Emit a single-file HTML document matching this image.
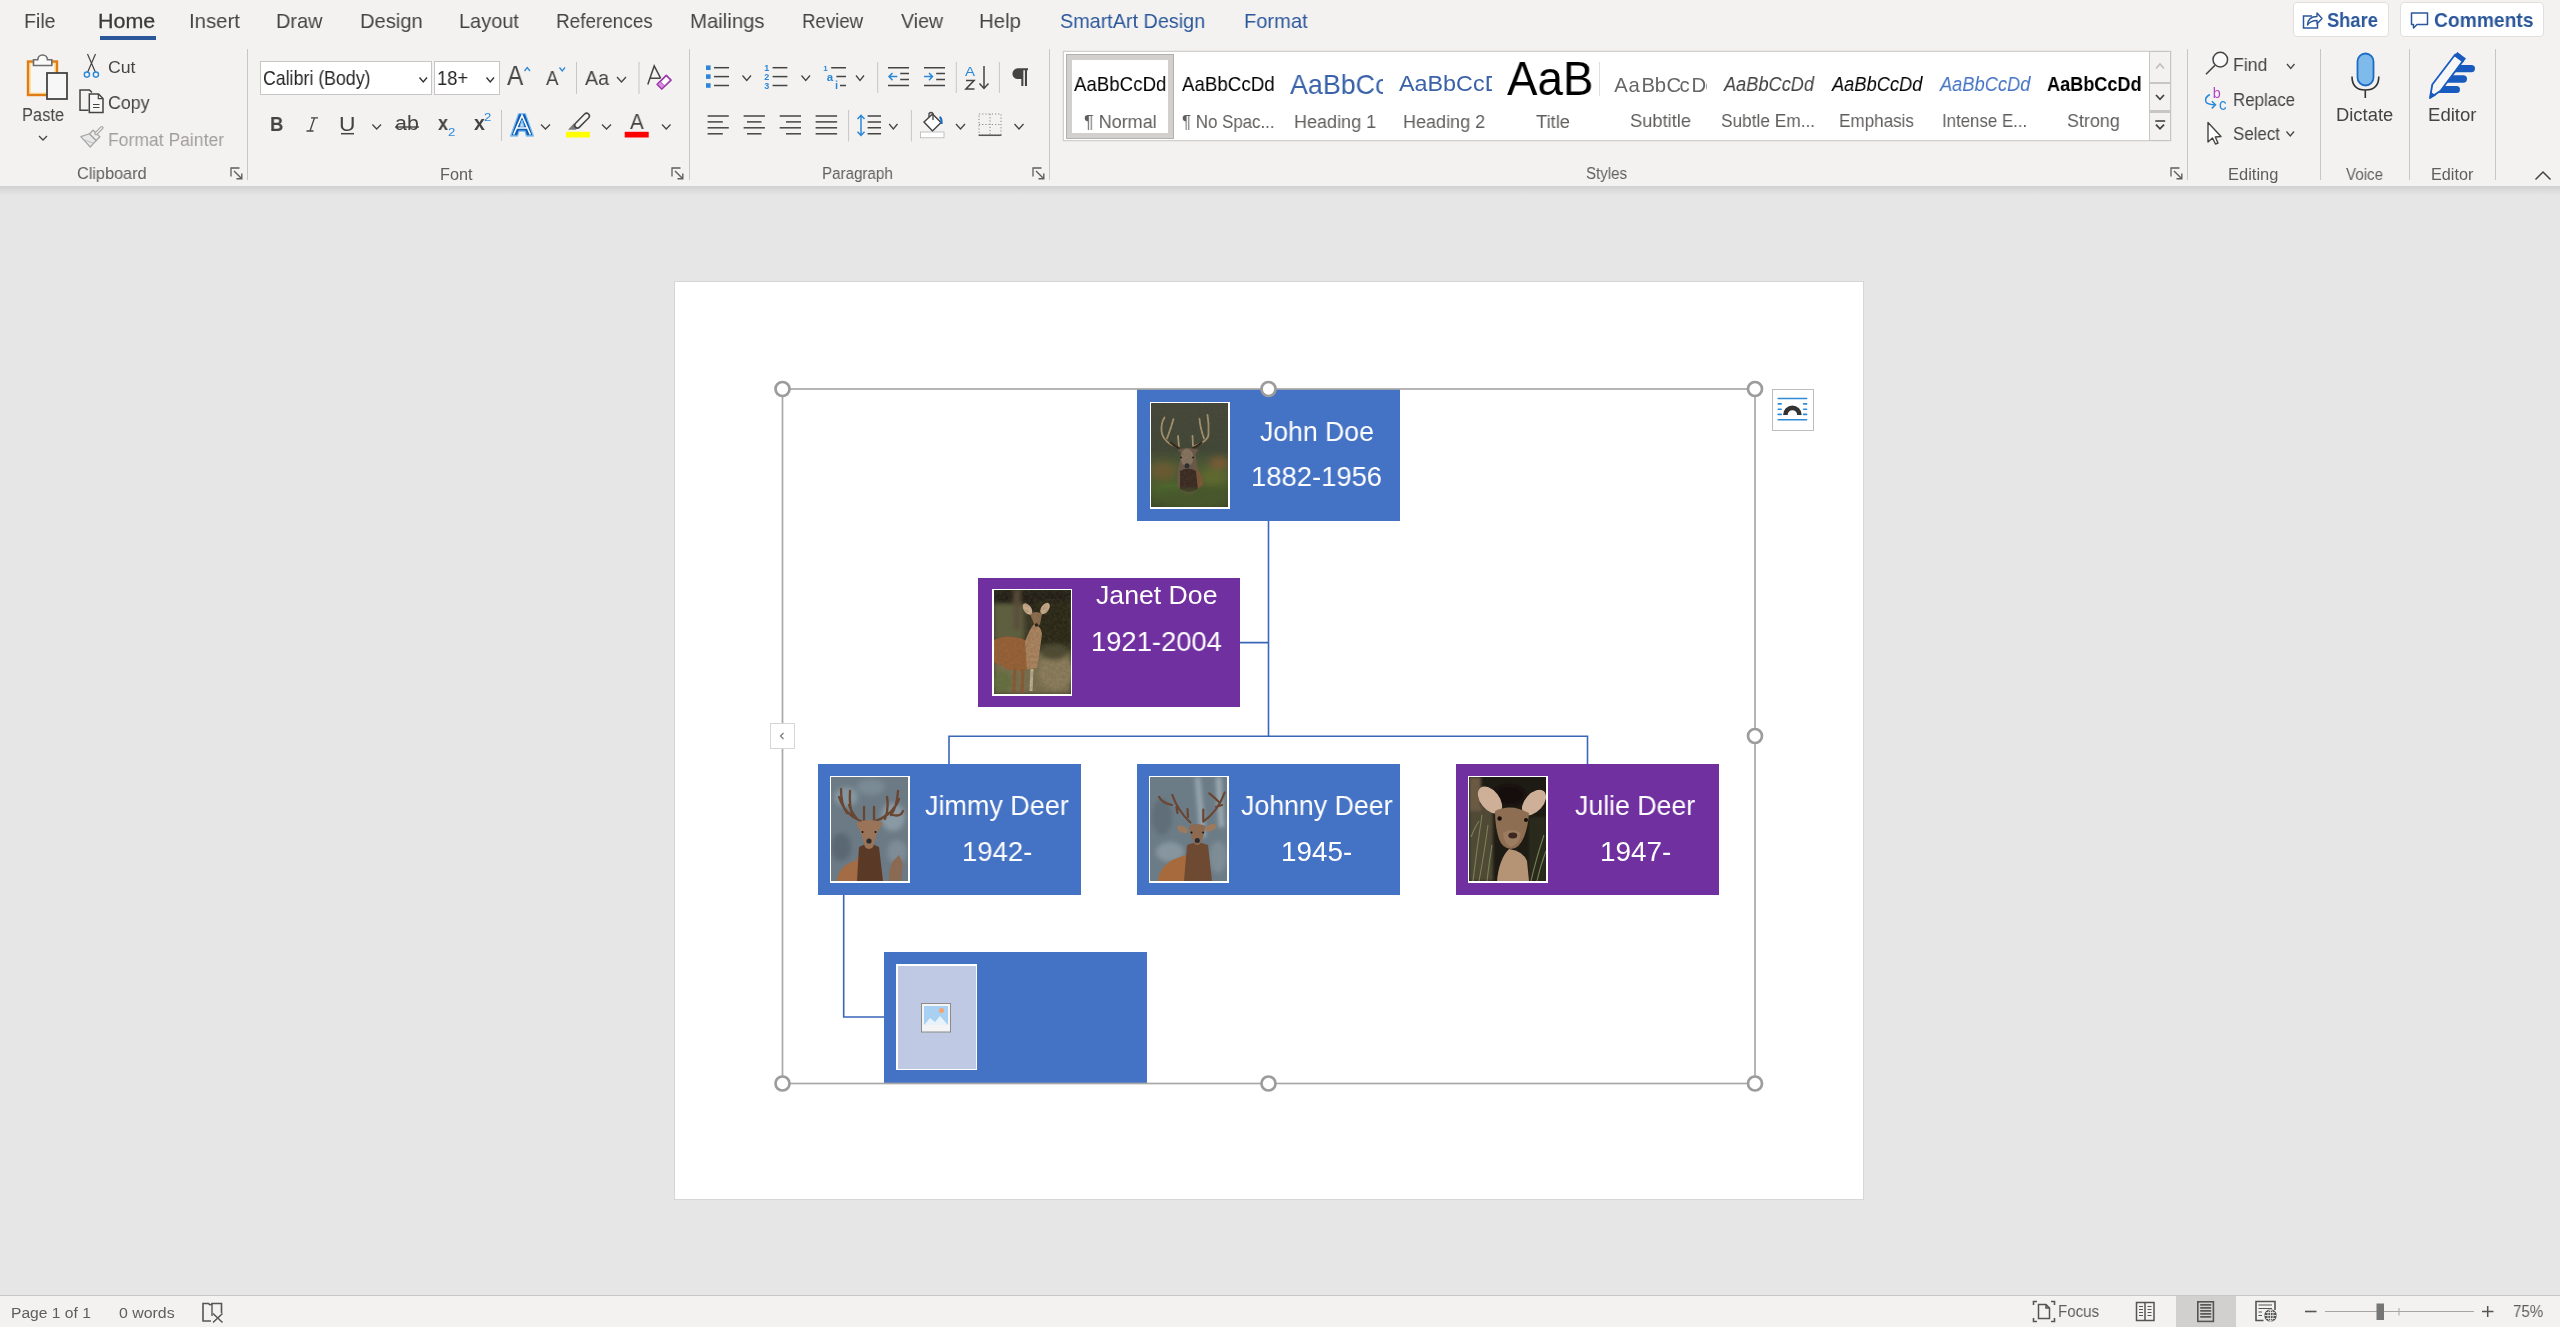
<!DOCTYPE html><html><head><meta charset="utf-8"><style>
html,body{margin:0;padding:0;}
body{width:2560px;height:1327px;position:relative;overflow:hidden;background:#e6e6e6;font-family:"Liberation Sans",sans-serif;}
.t{position:absolute;white-space:nowrap;line-height:1;transform-origin:0 0;will-change:transform;}
.a{position:absolute;}
svg{position:absolute;overflow:visible;}
svg text{}
.gs{will-change:transform;}
</style></head><body>

<div class="a" style="left:0;top:0;width:2560px;height:186px;background:#f3f2f1"></div>
<div class="a" style="left:0;top:186px;width:2560px;height:9px;background:linear-gradient(#d0d0d0,#dadada 45%,#e6e6e6)"></div>
<div class="a" style="left:0;top:1295px;width:2560px;height:32px;background:#f3f2f1;border-top:1px solid #c8c6c4;box-sizing:border-box"></div>
<div class="a" style="left:675px;top:282px;width:1188px;height:917px;background:#fff;box-shadow:0 0 0 1px #d6d6d6"></div>
<div class="t" style="left:24.4px;top:10.5px;font-size:20.87px;color:#444444;transform:scaleX(0.9357);">File</div>
<div class="t" style="left:189.2px;top:10.5px;font-size:20.87px;color:#444444;transform:scaleX(0.9763);">Insert</div>
<div class="t" style="left:276.4px;top:10.5px;font-size:20.87px;color:#444444;transform:scaleX(0.9562);">Draw</div>
<div class="t" style="left:359.7px;top:10.5px;font-size:20.87px;color:#444444;transform:scaleX(0.9664);">Design</div>
<div class="t" style="left:458.6px;top:10.5px;font-size:20.87px;color:#444444;transform:scaleX(0.9567);">Layout</div>
<div class="t" style="left:555.5px;top:10.5px;font-size:20.87px;color:#444444;transform:scaleX(0.9066);">References</div>
<div class="t" style="left:689.7px;top:10.5px;font-size:20.87px;color:#444444;transform:scaleX(0.9745);">Mailings</div>
<div class="t" style="left:801.9px;top:10.5px;font-size:20.87px;color:#444444;transform:scaleX(0.8939);">Review</div>
<div class="t" style="left:900.9px;top:10.5px;font-size:20.87px;color:#444444;transform:scaleX(0.9382);">View</div>
<div class="t" style="left:978.7px;top:10.5px;font-size:20.87px;color:#444444;transform:scaleX(0.9781);">Help</div>
<div class="t" style="left:98.3px;top:10.5px;font-size:20.87px;color:#3b3a39;transform:scaleX(1.0281);-webkit-text-stroke:0.3px #3b3a39;">Home</div>
<div class="a" style="left:100px;top:36px;width:56px;height:4px;background:#2b579a"></div>
<div class="t" style="left:1059.6px;top:10.5px;font-size:20.87px;color:#2b579a;transform:scaleX(0.9484);">SmartArt Design</div>
<div class="t" style="left:1243.7px;top:10.5px;font-size:20.87px;color:#2b579a;transform:scaleX(0.9630);">Format</div>
<div class="a" style="left:2293px;top:2px;width:96px;height:35px;background:#fff;border:1px solid #e1dfdd;border-radius:4px;box-sizing:border-box"></div>
<div class="a" style="left:2400px;top:2px;width:144px;height:35px;background:#fff;border:1px solid #e1dfdd;border-radius:4px;box-sizing:border-box"></div>
<div class="t" style="left:2326.5px;top:10.1px;font-size:20.43px;color:#2b579a;transform:scaleX(0.8958);font-weight:bold;">Share</div>
<div class="t" style="left:2433.8px;top:10.1px;font-size:20.43px;color:#2b579a;transform:scaleX(0.9422);font-weight:bold;">Comments</div>
<div class="a" style="left:247px;top:49px;width:1px;height:131px;background:#c8c6c4"></div>
<div class="a" style="left:689px;top:49px;width:1px;height:131px;background:#c8c6c4"></div>
<div class="a" style="left:1049px;top:49px;width:1px;height:131px;background:#c8c6c4"></div>
<div class="a" style="left:2187px;top:49px;width:1px;height:131px;background:#c8c6c4"></div>
<div class="a" style="left:2320px;top:49px;width:1px;height:131px;background:#c8c6c4"></div>
<div class="a" style="left:2409px;top:49px;width:1px;height:131px;background:#c8c6c4"></div>
<div class="a" style="left:2495px;top:49px;width:1px;height:131px;background:#c8c6c4"></div>
<div class="t" style="left:76.5px;top:165.9px;font-size:16.81px;color:#605e5c;transform:scaleX(0.9683);">Clipboard</div>
<div class="t" style="left:439.5px;top:166.2px;font-size:16.23px;color:#605e5c;transform:scaleX(0.9941);">Font</div>
<div class="t" style="left:821.5px;top:166.4px;font-size:16.52px;color:#605e5c;transform:scaleX(0.9176);">Paragraph</div>
<div class="t" style="left:1585.8px;top:166.3px;font-size:16.67px;color:#605e5c;transform:scaleX(0.9051);">Styles</div>
<div class="t" style="left:2228.4px;top:166.4px;font-size:16.23px;color:#605e5c;transform:scaleX(1.0162);">Editing</div>
<div class="t" style="left:2345.9px;top:166.4px;font-size:16.23px;color:#605e5c;transform:scaleX(0.9312);">Voice</div>
<div class="t" style="left:2430.6px;top:166.4px;font-size:16.23px;color:#605e5c;transform:scaleX(0.9994);">Editor</div>
<div class="t" style="left:22.4px;top:105.9px;font-size:18.12px;color:#444444;transform:scaleX(0.9086);">Paste</div>
<div class="t" style="left:107.9px;top:58.5px;font-size:17.17px;color:#444444;transform:scaleX(1.0287);">Cut</div>
<div class="t" style="left:107.9px;top:93.9px;font-size:18.62px;color:#444444;transform:scaleX(0.9553);">Copy</div>
<div class="t" style="left:108.0px;top:129.5px;font-size:18.99px;color:#a19f9d;transform:scaleX(0.9245);">Format Painter</div>
<svg style="left:0;top:0" width="1" height="1">
<rect x="28" y="61.5" width="29" height="33.5" fill="#fbe2a6" stroke="#e07c14" stroke-width="2.4"/>
<rect x="31" y="64.5" width="23" height="28" fill="#f7f7f7"/>
<path d="M33.5 65.5 V59.8 H37.8 A4.8 4.8 0 0 1 47.4 59.8 H51.8 V65.5 Z" fill="#fafafa" stroke="#6d6d6d" stroke-width="1.6"/>
<rect x="47" y="73" width="20" height="26" fill="#f7f7f7" stroke="#444" stroke-width="1.8"/>
<path d="M39 136 L43 140 L47 136" fill="none" stroke="#444" stroke-width="1.3"/>
</svg>
<svg style="left:0;top:0" width="1" height="1">
<path d="M87.5 54 L95.3 72 M95.5 54 L87.7 72" stroke="#444" stroke-width="1.2" fill="none"/>
<circle cx="86.9" cy="74.6" r="2.6" fill="none" stroke="#2b88d8" stroke-width="1.4"/>
<circle cx="95.9" cy="74.6" r="2.6" fill="none" stroke="#2b88d8" stroke-width="1.4"/>
</svg>
<svg style="left:0;top:0" width="1" height="1">
<path d="M88.5 110.2 H80 V90 H89.5 L92 92.5" fill="none" stroke="#444" stroke-width="1.5"/>
<path d="M89.3 112.6 V94 H98.5 L103 98.5 V112.6 Z" fill="#f7f7f7" stroke="#444" stroke-width="1.5"/><path d="M98.3 94 V98.7 H103" fill="none" stroke="#444" stroke-width="1.2"/>
<path d="M93 104.5 H99.5 M93 107.5 H99.5" stroke="#444" stroke-width="1.2"/>
</svg>
<svg style="left:0;top:0" width="1" height="1">
<path d="M80.8 136.6 L89.5 133.8 L96.2 140.5 L90.2 147 Z" fill="#e8e8e8" stroke="#a6a6a6" stroke-width="1.2" stroke-linejoin="round"/>
<path d="M84.5 140 L93 143" stroke="#bdbdbd" stroke-width="1"/>
<path d="M89.5 133.8 L93.2 130.2 L99.8 136.8 L96.2 140.5 Z" fill="#efefef" stroke="#a6a6a6" stroke-width="1.3"/>
<path d="M96 133.5 L101.8 127.8" stroke="#a6a6a6" stroke-width="3.6" stroke-linecap="round"/><path d="M96 133.5 L101.8 127.8" stroke="#f0f0f0" stroke-width="1.2" stroke-linecap="round"/>
</svg>
<svg style="left:0;top:0" width="1" height="1"><path d="M231 176.5 V168 H239.5" fill="none" stroke="#605e5c" stroke-width="1.3"/><path d="M234 171 L241.8 178.8 M236.5 178.8 H241.8 V173.5" fill="none" stroke="#605e5c" stroke-width="1.4"/></svg>
<svg style="left:0;top:0" width="1" height="1"><path d="M672 176.5 V168 H680.5" fill="none" stroke="#605e5c" stroke-width="1.3"/><path d="M675 171 L682.8 178.8 M677.5 178.8 H682.8 V173.5" fill="none" stroke="#605e5c" stroke-width="1.4"/></svg>
<svg style="left:0;top:0" width="1" height="1"><path d="M1033 176.5 V168 H1041.5" fill="none" stroke="#605e5c" stroke-width="1.3"/><path d="M1036 171 L1043.8 178.8 M1038.5 178.8 H1043.8 V173.5" fill="none" stroke="#605e5c" stroke-width="1.4"/></svg>
<svg style="left:0;top:0" width="1" height="1"><path d="M2171 176.5 V168 H2179.5" fill="none" stroke="#605e5c" stroke-width="1.3"/><path d="M2174 171 L2181.8 178.8 M2176.5 178.8 H2181.8 V173.5" fill="none" stroke="#605e5c" stroke-width="1.4"/></svg>
<div class="a" style="left:260px;top:61px;width:172px;height:34px;background:#fff;border:1px solid #c8c6c4;box-sizing:border-box"></div>
<div class="a" style="left:434px;top:61px;width:66px;height:34px;background:#fff;border:1px solid #c8c6c4;box-sizing:border-box"></div>
<div class="t" style="left:262.5px;top:69.4px;font-size:19.42px;color:#262626;transform:scaleX(0.9147);">Calibri (Body)</div>
<div class="t" style="left:437.1px;top:69.4px;font-size:19.42px;color:#262626;transform:scaleX(0.9479);">18+</div>
<svg style="left:0;top:0" width="1" height="1"><path d="M419.5 77.5 L423.25 82 L427 77.5" fill="none" stroke="#333" stroke-width="1.4"/><path d="M486.5 77.5 L490.25 82 L494 77.5" fill="none" stroke="#333" stroke-width="1.4"/><path d="M617 77 L621.5 82 L626 77" fill="none" stroke="#444" stroke-width="1.3"/><path d="M372.4 124.5 L376.7 129 L381 124.5" fill="none" stroke="#444" stroke-width="1.3"/><path d="M541 124.5 L545.5 129 L550 124.5" fill="none" stroke="#444" stroke-width="1.3"/><path d="M602 124.5 L606.5 129 L611 124.5" fill="none" stroke="#444" stroke-width="1.3"/><path d="M662 124.5 L666.25 129 L670.5 124.5" fill="none" stroke="#444" stroke-width="1.3"/><path d="M524.5 71 L527.2 67.5 L530 71" fill="none" stroke="#2b88d8" stroke-width="1.3"/><path d="M559.5 67.5 L562.2 71 L565 67.5" fill="none" stroke="#2b88d8" stroke-width="1.3"/><path d="M576.5 62 V94 M639 62 V94 M501.5 110 V141" stroke="#c8c6c4" stroke-width="1"/><path d="M647.8 84.6 L654.2 65.9 L660.6 78.2 M650.6 78.2 H660.6" fill="none" stroke="#444" stroke-width="1.5"/><path d="M666.3 75.4 L671 80.1 L661.8 89 L657.2 84.3 Z" fill="#fff" stroke="#9b35a8" stroke-width="1.7" stroke-linejoin="round"/><path d="M657.6 84.3 L660.3 81.6 L664.6 85.9 L661.8 88.6 Z" fill="#d98fe0" stroke="#9b35a8" stroke-width="0.8"/><path d="M341 133.7 H354" stroke="#444" stroke-width="1.5"/><path d="M395 127 H419" stroke="#444" stroke-width="1.4"/><path d="M568 129.8 L573.8 123.6 L577.6 127.4 L576 129.8 Z" fill="#7a7a7a"/><path d="M577.5 125.2 L586.6 116" stroke="#444" stroke-width="7" stroke-linecap="round"/><path d="M577.5 125.2 L586.6 116" stroke="#f4f4f4" stroke-width="4" stroke-linecap="round"/><rect x="566" y="131.8" width="24" height="5.7" fill="#ffff00"/><rect x="624.7" y="131.8" width="24" height="5.7" fill="#ff0000"/></svg>
<div class="t" style="left:507.3px;top:61.6px;font-size:27.39px;color:#444;transform:scaleX(0.8949);">A</div>
<div class="t" style="left:546.0px;top:67.5px;font-size:20.43px;color:#444;transform:scaleX(0.9199);">A</div>
<div class="t" style="left:585.2px;top:67.0px;font-size:21.01px;color:#444;transform:scaleX(0.9361);">Aa</div>
<div class="t" style="left:269.8px;top:114.0px;font-size:20.00px;color:#444;transform:scaleX(0.9262);font-weight:bold;">B</div>
<svg style="left:0;top:0" width="1" height="1"><path d="M311 117.8 H318 M306.5 131 H313.5 M314.5 117.8 L310 131" fill="none" stroke="#444" stroke-width="1.3"/></svg>
<div class="t" style="left:339.3px;top:114.0px;font-size:20.00px;color:#444;transform:scaleX(1.1404);">U</div>
<div class="t" style="left:395.1px;top:114.4px;font-size:19.57px;color:#444;transform:scaleX(1.0917);">ab</div>
<div class="t" style="left:438.0px;top:114.3px;font-size:19.62px;color:#444;transform:scaleX(0.9249);font-weight:bold;">x</div>
<div class="t" style="left:448.3px;top:127.1px;font-size:11.59px;color:#2b88d8;transform:scaleX(1.1374);">2</div>
<div class="t" style="left:474.1px;top:114.3px;font-size:19.62px;color:#444;transform:scaleX(0.9626);font-weight:bold;">x</div>
<div class="t" style="left:484.3px;top:112.1px;font-size:11.59px;color:#2b88d8;transform:scaleX(1.1374);">2</div>
<svg style="left:0;top:0" width="1" height="1"><path d="M510.6 136 L518.6 113.6 H525.4 L533.4 136 H526.4 L525 131.2 H519 L517.6 136 Z M520.3 126.3 H523.7 L522 120.5 Z" fill="#0f5cb5" stroke="#84c0ef" stroke-width="1.3" stroke-linejoin="round"/><path d="M513.6 134.6 L522 115.4 L530.4 134.6 M516.8 128 H527.2" fill="none" stroke="#fff" stroke-width="1.5"/></svg>
<div class="t" style="left:630.0px;top:110.9px;font-size:22.03px;color:#444;transform:scaleX(0.9420);">A</div>
<svg class="gs" style="left:0;top:0" width="1" height="1"><rect x="706" y="65.4" width="4.6" height="4.6" fill="#2b88d8"/><path d="M714 67.7 H729" stroke="#444" stroke-width="1.5"/><rect x="706" y="74.3" width="4.6" height="4.6" fill="#2b88d8"/><path d="M714 76.6 H729" stroke="#444" stroke-width="1.5"/><rect x="706" y="83.2" width="4.6" height="4.6" fill="#2b88d8"/><path d="M714 85.5 H729" stroke="#444" stroke-width="1.5"/><path d="M742.5 75.5 L746.75 80.5 L751 75.5" fill="none" stroke="#444" stroke-width="1.3"/><path d="M772.6 67.7 H787.4" stroke="#444" stroke-width="1.5"/><path d="M772.6 76.6 H787.4" stroke="#444" stroke-width="1.5"/><path d="M772.6 85.5 H787.4" stroke="#444" stroke-width="1.5"/><text x="764.3" y="71.3" font-family="Liberation Sans" font-weight="bold" font-size="9" fill="#2b88d8">1</text><text x="764.3" y="80.3" font-family="Liberation Sans" font-weight="bold" font-size="9" fill="#2b88d8">2</text><text x="764.3" y="89.3" font-family="Liberation Sans" font-weight="bold" font-size="9" fill="#2b88d8">3</text><path d="M801.5 75.5 L805.75 80.5 L810 75.5" fill="none" stroke="#444" stroke-width="1.3"/><text x="823.3" y="71.2" font-family="Liberation Sans" font-weight="bold" font-size="8" fill="#2b88d8">1</text><text x="826.8" y="80.8" font-family="Liberation Sans" font-weight="bold" font-size="11.5" fill="#2b88d8">a</text><rect x="835.8" y="83" width="1.5" height="6" fill="#2b88d8"/><rect x="835.8" y="80.5" width="1.5" height="1.3" fill="#2b88d8"/><path d="M831.2 67.7 H846 M836.4 76.6 H846 M840 85.5 H846" stroke="#444" stroke-width="1.5"/><path d="M856 75.5 L860.0 80.5 L864 75.5" fill="none" stroke="#444" stroke-width="1.3"/><path d="M877.7 62 V93 M956.3 62 V93 M999.4 62 V93 M848.6 110 V141.5 M911.4 110 V141.5" stroke="#c8c6c4" stroke-width="1"/><path d="M888 67.7 H909 M900.2 73.6 H909 M900.2 79.6 H909 M888 85.5 H909" stroke="#444" stroke-width="1.5"/><path d="M897.3 76.6 H889 M892.5 73 L889 76.6 L892.5 80.2" fill="none" stroke="#2b88d8" stroke-width="1.5"/><path d="M924 67.7 H945 M936.2 73.6 H945 M936.2 79.6 H945 M924 85.5 H945" stroke="#444" stroke-width="1.5"/><path d="M924 76.6 H932.5 M929 73 L932.5 76.6 L929 80.2" fill="none" stroke="#2b88d8" stroke-width="1.5"/><text x="965" y="75.5" font-family="Liberation Sans" font-size="13" fill="#2b88d8" textLength="10" lengthAdjust="spacingAndGlyphs">A</text><path d="M966 80.5 H974 L966 89 H974.5" fill="none" stroke="#444" stroke-width="1.6"/><path d="M984 66 V88 M979.5 83.5 L984 88.5 L988.5 83.5" fill="none" stroke="#444" stroke-width="1.5"/><path d="M1028 68.3 H1017.8 A5.4 5.4 0 0 0 1017.8 79.1 H1021.3 V86 H1023.4 V70.3 H1024.9 V86 H1027 V70.3 H1028 Z" fill="#444"/><path d="M707.6 116 H728.8" stroke="#444" stroke-width="1.5"/><path d="M707.6 121.9 H722.8" stroke="#444" stroke-width="1.5"/><path d="M707.6 127.8 H728.8" stroke="#444" stroke-width="1.5"/><path d="M707.6 133.8 H722.8" stroke="#444" stroke-width="1.5"/><path d="M743.6 116 H764.9" stroke="#444" stroke-width="1.5"/><path d="M747 121.9 H761.5" stroke="#444" stroke-width="1.5"/><path d="M743.6 127.8 H764.9" stroke="#444" stroke-width="1.5"/><path d="M747 133.8 H761.5" stroke="#444" stroke-width="1.5"/><path d="M779.7 116 H801" stroke="#444" stroke-width="1.5"/><path d="M786 121.9 H801" stroke="#444" stroke-width="1.5"/><path d="M779.7 127.8 H801" stroke="#444" stroke-width="1.5"/><path d="M786 133.8 H801" stroke="#444" stroke-width="1.5"/><path d="M815.6 116 H837.1" stroke="#444" stroke-width="1.5"/><path d="M815.6 121.9 H837.1" stroke="#444" stroke-width="1.5"/><path d="M815.6 127.8 H837.1" stroke="#444" stroke-width="1.5"/><path d="M815.6 133.8 H837.1" stroke="#444" stroke-width="1.5"/><path d="M861 116 V135 M857.5 119 L861 115.3 L864.5 119 M857.5 131.8 L861 135.5 L864.5 131.8" fill="none" stroke="#2b88d8" stroke-width="1.5"/><path d="M867.6 116 H881 M867.6 121.9 H881 M867.6 127.8 H881 M867.6 133.8 H881" stroke="#444" stroke-width="1.5"/><path d="M889.2 124 L893.35 129 L897.5 124" fill="none" stroke="#444" stroke-width="1.3"/><path d="M924 122 L932.5 114 L941 122.5 L932.5 131 Z" fill="#fff" stroke="#444" stroke-width="1.5"/><path d="M929 117 V113.5 Q931 111.5 933 113.5 V120" fill="none" stroke="#444" stroke-width="1.3"/><path d="M939.5 117 Q942 118 941.5 124" fill="none" stroke="#1e6bc4" stroke-width="2.2"/><rect x="920.5" y="132" width="23.5" height="5.8" fill="#fff" stroke="#b5b5b5" stroke-width="0.8"/><path d="M956 124 L960.5 129 L965 124" fill="none" stroke="#444" stroke-width="1.3"/><rect x="979" y="114" width="22" height="21" fill="none" stroke="#888" stroke-width="1" stroke-dasharray="1.2 2"/><path d="M990 114 V135 M979 124.5 H1001" stroke="#888" stroke-width="1" stroke-dasharray="1.2 2"/><path d="M978.6 135.3 H1001.4" stroke="#555" stroke-width="1.5"/><path d="M1014.5 124 L1019.0 129 L1023.5 124" fill="none" stroke="#444" stroke-width="1.3"/></svg>
<div class="a" style="left:1063px;top:51px;width:1108px;height:90px;background:#fff;border:1px solid #d2d0ce;box-shadow:0 0 0 0.6px #e4e2e0;box-sizing:border-box"></div>
<div class="a" style="left:1066px;top:54px;width:108px;height:85px;border:1px solid #b3b0ad;box-sizing:border-box"></div>
<div class="a" style="left:1067px;top:55px;width:106px;height:83px;border:5px solid #d2d0ce;box-sizing:border-box"></div>
<div class="a" style="left:2149px;top:51px;width:22px;height:90px;background:#f3f2f1;border:1px solid #c8c6c4;box-sizing:border-box"></div>
<div class="a" style="left:2149px;top:81.5px;width:22px;height:2.4px;background:#c8c6c4"></div>
<div class="a" style="left:2149px;top:110px;width:22px;height:2.6px;background:#c8c6c4"></div>
<svg style="left:0;top:0" width="1" height="1"><path d="M2156 68.5 L2160.0 64 L2164 68.5" fill="none" stroke="#c0bebc" stroke-width="1.6"/><path d="M2156 95 L2160.0 99.3 L2164 95" fill="none" stroke="#444" stroke-width="1.8"/><path d="M2156 124.6 L2160.0 128.8 L2164 124.6" fill="none" stroke="#444" stroke-width="1.8"/><path d="M2155.3 121 H2165.2" stroke="#444" stroke-width="1.6"/><path d="M1599.5 62 V96" stroke="#e1dfdd" stroke-width="1"/></svg>
<div class="t" style="left:1074.3px;top:74.2px;font-size:20.29px;color:#000;transform:scaleX(0.9211);">AaBbCcDd</div>
<div class="t" style="left:1083.8px;top:111.6px;font-size:18.99px;color:#605e5c;transform:scaleX(0.9476);">¶ Normal</div>
<div class="t" style="left:1182.3px;top:74.2px;font-size:20.29px;color:#000;transform:scaleX(0.9241);">AaBbCcDd</div>
<div class="t" style="left:1182.3px;top:111.6px;font-size:18.99px;color:#605e5c;transform:scaleX(0.8890);">¶ No Spac...</div>
<div class="a" style="left:1286px;top:60px;width:97px;height:40px;overflow:hidden"><div class="t" style="left:4.2px;top:9.9px;font-size:28.55px;color:#3a62a8;transform:scaleX(0.9398);">AaBbCc</div></div>
<div class="t" style="left:1294.2px;top:111.6px;font-size:18.99px;color:#605e5c;transform:scaleX(0.9489);">Heading 1</div>
<div class="a" style="left:1394px;top:60px;width:98px;height:40px;overflow:hidden"><div class="t" style="left:4.5px;top:13.2px;font-size:22.17px;color:#3a62a8;transform:scaleX(1.0535);">AaBbCcD</div></div>
<div class="t" style="left:1402.6px;top:111.6px;font-size:18.99px;color:#605e5c;transform:scaleX(0.9488);">Heading 2</div>
<div class="t" style="left:1507.4px;top:54.9px;font-size:47.54px;color:#000;transform:scaleX(0.9604);">AaB</div>
<div class="t" style="left:1535.5px;top:111.6px;font-size:18.99px;color:#605e5c;transform:scaleX(0.9679);">Title</div>
<div class="a" style="left:1600px;top:60px;width:107px;height:40px;overflow:hidden"><svg class="gs" style="left:0;top:0" width="107" height="40"><text x="14.2 28.6 41.6 54.8 66.6 79.6 91.6 105.5" y="31.5" font-family="Liberation Sans" font-size="20.3" fill="#666">AaBbCcDd</text></svg></div>
<div class="t" style="left:1629.7px;top:111.2px;font-size:19.13px;color:#605e5c;transform:scaleX(0.9585);">Subtitle</div>
<div class="t" style="left:1723.9px;top:73.9px;font-size:20.72px;color:#404040;transform:scaleX(0.8777);font-style:italic;">AaBbCcDd</div>
<div class="t" style="left:1721.4px;top:111.2px;font-size:19.13px;color:#605e5c;transform:scaleX(0.9037);">Subtle Em...</div>
<div class="t" style="left:1832.0px;top:73.9px;font-size:20.72px;color:#000;transform:scaleX(0.8815);font-style:italic;">AaBbCcDd</div>
<div class="t" style="left:1838.8px;top:111.2px;font-size:19.13px;color:#605e5c;transform:scaleX(0.8938);">Emphasis</div>
<div class="t" style="left:1939.9px;top:73.9px;font-size:20.72px;color:#4472c4;transform:scaleX(0.8815);font-style:italic;">AaBbCcDd</div>
<div class="t" style="left:1942.3px;top:111.2px;font-size:19.13px;color:#605e5c;transform:scaleX(0.8814);">Intense E...</div>
<div class="t" style="left:2046.5px;top:73.9px;font-size:20.72px;color:#000;transform:scaleX(0.8747);font-weight:bold;">AaBbCcDd</div>
<div class="t" style="left:2066.9px;top:111.2px;font-size:19.13px;color:#605e5c;transform:scaleX(0.9367);">Strong</div>
<div class="t" style="left:2233.2px;top:55.6px;font-size:18.70px;color:#444444;transform:scaleX(0.9450);">Find</div>
<div class="t" style="left:2233.2px;top:90.6px;font-size:18.26px;color:#444444;transform:scaleX(0.9269);">Replace</div>
<div class="t" style="left:2233.4px;top:125.5px;font-size:17.83px;color:#444444;transform:scaleX(0.9470);">Select</div>
<div class="t" style="left:2336.3px;top:106.2px;font-size:18.26px;color:#444444;transform:scaleX(1.0072);">Dictate</div>
<div class="t" style="left:2427.9px;top:106.2px;font-size:18.26px;color:#444444;transform:scaleX(1.0169);">Editor</div>
<svg class="gs" style="left:0;top:0" width="1" height="1"><path d="M2287 64 L2290.75 68.5 L2294.5 64" fill="none" stroke="#444" stroke-width="1.3"/><path d="M2286.5 131.5 L2290.25 136 L2294 131.5" fill="none" stroke="#444" stroke-width="1.3"/><circle cx="2220.3" cy="59.6" r="7.3" fill="#fafafa" stroke="#444" stroke-width="1.5"/><path d="M2215 65.2 L2206 74.3" stroke="#444" stroke-width="1.6"/><text x="2212.8" y="97.6" font-family="Liberation Sans" font-size="15" fill="#b146c2" textLength="8" lengthAdjust="spacingAndGlyphs">b</text><text x="2219" y="109.9" font-family="Liberation Sans" font-size="17" fill="#2b88d8" textLength="7.5" lengthAdjust="spacingAndGlyphs">c</text><path d="M2209.8 94.5 Q2204.5 97.5 2205.8 101.5 Q2207 104.8 2215.5 104.8 M2211.8 101.2 L2215.5 104.8 L2211.8 108.4" fill="none" stroke="#2b88d8" stroke-width="1.5"/><path d="M2208 122.5 V142 L2212.5 138 L2215.5 144 L2218 143 L2215.3 137 L2221 136.5 Z" fill="#fff" stroke="#444" stroke-width="1.4" stroke-linejoin="round"/><rect x="2357.5" y="53.5" width="16" height="32" rx="8" fill="#7fbbea" stroke="#1e6bc4" stroke-width="1.8"/><path d="M2352 76.5 Q2352 90 2365.3 90 Q2378.8 90 2378.8 76.5 M2365.3 90 V98" fill="none" stroke="#333" stroke-width="1.6"/><rect x="2452" y="65" width="23" height="7.2" rx="3.6" fill="#185abd"/><rect x="2444" y="75.3" width="23" height="7.5" rx="3.7" fill="#185abd"/><rect x="2436" y="86" width="24" height="7.1" rx="3.5" fill="#185abd"/><path d="M2430 98 L2432.3 84.5 L2455.2 54.5 L2463.2 60.6 L2440.6 90.8 Z" fill="#f7f7f7" stroke="#185abd" stroke-width="1.8" stroke-linejoin="round"/><path d="M2454 56 L2457.3 52 L2466 58.6 L2462.8 62.6 Z" fill="#185abd"/><path d="M2429.4 98.6 L2430.6 91.8 L2436 95.6 Z" fill="#185abd"/><path d="M2535.5 179.5 L2543 172 L2550.5 179.5" fill="none" stroke="#444" stroke-width="1.5"/><path d="M2312 16 H2303.5 V28 H2317.5 V24" fill="none" stroke="#2b579a" stroke-width="1.5"/><path d="M2307.5 25 Q2308 16.5 2317 16.5 V13 L2322 18.5 L2317 24 V20.5 Q2310.5 20.5 2307.5 25 Z" fill="none" stroke="#2b579a" stroke-width="1.4" stroke-linejoin="round"/><path d="M2411.5 13 H2427.5 V24.5 H2417 L2413.5 28 V24.5 H2411.5 Z" fill="none" stroke="#2b579a" stroke-width="1.5" stroke-linejoin="round"/></svg>
<div class="t" style="left:11.1px;top:1304.9px;font-size:15.22px;color:#605e5c;transform:scaleX(1.0259);">Page 1 of 1</div>
<div class="t" style="left:118.7px;top:1304.9px;font-size:15.22px;color:#605e5c;transform:scaleX(1.0438);">0 words</div>
<div class="t" style="left:2058.4px;top:1304.1px;font-size:16.67px;color:#605e5c;transform:scaleX(0.9057);">Focus</div>
<div class="t" style="left:2512.7px;top:1304.1px;font-size:16.67px;color:#605e5c;transform:scaleX(0.9086);">75%</div>
<div class="a" style="left:2176px;top:1296px;width:60px;height:31px;background:#d2d0ce"></div>
<svg style="left:0;top:0" width="1" height="1"><path d="M211 1321 H203 V1303.5 H208.5 Q210.5 1306 212 1303.5 H221.5 V1313" fill="none" stroke="#555" stroke-width="1.6"/><path d="M212 1304 V1316" stroke="#555" stroke-width="1.4"/><path d="M213 1313.5 L222.5 1322.5 M222.5 1313.5 L213 1322.5" stroke="#555" stroke-width="1.5"/><path d="M2033.5 1305 V1301.5 H2037 M2051 1301.5 H2054.5 V1305 M2054.5 1318 V1321.5 H2051 M2037 1321.5 H2033.5 V1318" fill="none" stroke="#555" stroke-width="1.6"/><path d="M2038.5 1318.5 V1304.5 H2046 L2049.5 1308 V1318.5 Z M2046 1304.5 V1308 H2049.5" fill="none" stroke="#555" stroke-width="1.5"/><path d="M2136.5 1302.5 H2145 V1320.5 H2136.5 Z M2145 1302.5 H2154 V1320.5 H2145" fill="none" stroke="#555" stroke-width="1.5"/><path d="M2139 1306.5 H2143 M2147.5 1306.5 H2151.5" stroke="#555" stroke-width="1.2"/><path d="M2139 1309.5 H2143 M2147.5 1309.5 H2151.5" stroke="#555" stroke-width="1.2"/><path d="M2139 1312.5 H2143 M2147.5 1312.5 H2151.5" stroke="#555" stroke-width="1.2"/><path d="M2139 1315.5 H2143 M2147.5 1315.5 H2151.5" stroke="#555" stroke-width="1.2"/><rect x="2197.8" y="1301.8" width="15.6" height="19.6" fill="none" stroke="#555" stroke-width="1.6"/><path d="M2200.8 1304.9 H2210.6" stroke="#5a5a5a" stroke-width="1.6" stroke-linecap="round"/><path d="M2200.8 1307.9 H2210.6" stroke="#5a5a5a" stroke-width="1.6" stroke-linecap="round"/><path d="M2200.8 1310.9 H2210.6" stroke="#5a5a5a" stroke-width="1.6" stroke-linecap="round"/><path d="M2200.8 1313.9 H2210.6" stroke="#5a5a5a" stroke-width="1.6" stroke-linecap="round"/><path d="M2200.8 1316.9 H2210.6" stroke="#5a5a5a" stroke-width="1.6" stroke-linecap="round"/><path d="M2263.5 1320.5 H2256 V1301.5 H2275 V1310" fill="none" stroke="#555" stroke-width="1.6"/><path d="M2258.5 1305 H2272 M2258.5 1308.5 H2272 M2258.5 1312 H2262 M2258.5 1315.5 H2262" stroke="#555" stroke-width="1.2"/><circle cx="2270.5" cy="1315.5" r="6.2" fill="#555"/><path d="M2264.5 1315.5 H2276.5 M2270.5 1309.5 V1321.5 M2266 1312.5 H2275 M2266 1318.5 H2275" stroke="#f3f2f1" stroke-width="0.8"/><ellipse cx="2270.5" cy="1315.5" rx="2.6" ry="6" fill="none" stroke="#f3f2f1" stroke-width="0.8"/><path d="M2305 1311.5 H2316.5" stroke="#555" stroke-width="1.6"/><path d="M2482 1311.5 H2493.5 M2487.7 1306 V1317" stroke="#555" stroke-width="1.5"/><path d="M2325 1311.5 H2474" stroke="#a6a6a6" stroke-width="1.2"/><path d="M2399 1308 V1315.5" stroke="#a6a6a6" stroke-width="1"/><rect x="2376.5" y="1303.5" width="7.5" height="16.5" fill="#767676"/></svg>
<svg style="left:0;top:0" width="1" height="1"><path d="M1268.5 520 V737 M949 764 V736.3 H1587.5 V764 M1240 642.6 H1268.5 M843.7 895 V1017 H884" fill="none" stroke="#3a66b8" stroke-width="1.6"/></svg>
<div class="a" style="left:1137px;top:389px;width:263px;height:131.5px;background:#4472c4"></div>
<div class="a" style="left:978px;top:578px;width:262px;height:129px;background:#7030a0"></div>
<div class="a" style="left:818px;top:764px;width:263px;height:131px;background:#4472c4"></div>
<div class="a" style="left:1137px;top:764px;width:263px;height:131px;background:#4472c4"></div>
<div class="a" style="left:1456px;top:764px;width:263px;height:131px;background:#7030a0"></div>
<div class="a" style="left:884px;top:952px;width:263px;height:131px;background:#4472c4"></div>
<div class="a" style="left:1149.5px;top:401.5px;width:80px;height:107px;background:#fff"></div><svg style="left:1151.0px;top:403.0px;overflow:hidden" width="77" height="104" viewBox="0 0 77 104"><defs><linearGradient id="g1" x1="0" y1="0" x2="0" y2="1"><stop offset="0" stop-color="#45463a"/><stop offset="0.45" stop-color="#404636"/><stop offset="0.62" stop-color="#4f5c34"/><stop offset="0.82" stop-color="#4a5a2a"/><stop offset="1" stop-color="#384221"/></linearGradient>
<filter id="bl1"><feGaussianBlur stdDeviation="3"/></filter><filter id="sf1"><feGaussianBlur stdDeviation="0.5"/></filter>
<filter id="nz1" x="0" y="0" width="100%" height="100%"><feTurbulence type="fractalNoise" baseFrequency="0.45" numOctaves="2" seed="7"/><feColorMatrix values="0 0 0 0 0.1  0 0 0 0 0.1  0 0 0 0 0.05  0 0 0 -1.6 1.1"/></filter></defs>
<rect width="77" height="104" fill="url(#g1)"/>
<g filter="url(#bl1)"><ellipse cx="12" cy="68" rx="12" ry="9" fill="#6b5a30"/><ellipse cx="68" cy="60" rx="10" ry="6" fill="#7a5a35"/><ellipse cx="62" cy="74" rx="14" ry="8" fill="#5f6a2e"/><ellipse cx="20" cy="88" rx="18" ry="8" fill="#4b6a2c"/><ellipse cx="40" cy="96" rx="30" ry="8" fill="#46582a"/></g>
<g filter="url(#sf1)">
<path d="M28.4 45 Q12 40 10.5 28 Q10 20 13.5 14.5 M16 35.5 Q20 25 22.5 16 M27 33 L28 44" fill="none" stroke="#a89270" stroke-width="1.8" stroke-linecap="round"/>
<path d="M42.5 43.5 Q58 38 57.5 30.5 Q58 20 56.5 12 M53 35.5 Q49 24 48.5 16 M41.5 33 L42 43" fill="none" stroke="#a89270" stroke-width="1.8" stroke-linecap="round"/>
<path d="M19 39 Q24 44 29 45.5 M51 39 Q46 44 41.5 45" stroke="#33261a" stroke-width="2.2" fill="none"/>
<path d="M27 84 Q25 70 28 62 L30.5 51 Q28 48 26.5 47 Q36 43 48 47 Q46 49 44.5 51 L46 62 Q49 70 48 84 Q44 92 37 92 Q30 90 27 84 Z" fill="#6a5848"/>
<path d="M29 68 Q37 63 45 68 L47 86 Q38 92 29 86 Z" fill="#3a2c22"/>
<path d="M45 66 Q52 70 52 82 L47 86 Z" fill="#7e5638"/>
<ellipse cx="36" cy="54.5" rx="6.5" ry="9" fill="#857361"/>
<circle cx="36" cy="62.7" r="2.5" fill="#2a2a30"/><circle cx="30" cy="54.6" r="1" fill="#1a1a1a"/><circle cx="42" cy="54.6" r="1" fill="#1a1a1a"/>
</g>
<rect y="86" width="77" height="18" fill="#46582a" opacity="0.75" filter="url(#bl1)"/>
<rect width="77" height="104" filter="url(#nz1)" opacity="0.3"/></svg>
<div class="a" style="left:992px;top:588.5px;width:80px;height:107px;background:#fff"></div><svg style="left:993.5px;top:590.0px;overflow:hidden" width="77" height="104" viewBox="0 0 77 104"><defs><filter id="bl2"><feGaussianBlur stdDeviation="2"/></filter><filter id="nz2" x="0" y="0" width="100%" height="100%"><feTurbulence type="fractalNoise" baseFrequency="0.35" numOctaves="2" seed="3"/><feColorMatrix values="0 0 0 0 0.1  0 0 0 0 0.1  0 0 0 0 0.05  0 0 0 -1.6 1.1"/></filter></defs>
<rect width="77" height="104" fill="#3a3524"/>
<g filter="url(#bl2)"><rect x="0" y="0" width="77" height="22" fill="#211d14"/><rect x="40" y="10" width="37" height="45" fill="#2a2619"/><rect x="0" y="14" width="30" height="36" fill="#5f6040"/><rect x="0" y="62" width="77" height="42" fill="#7a7050"/><ellipse cx="62" cy="82" rx="18" ry="18" fill="#8c7d5c"/><ellipse cx="8" cy="92" rx="10" ry="12" fill="#66703f"/><rect x="20" y="0" width="6" height="40" fill="#5a4c3a"/><ellipse cx="60" cy="62" rx="14" ry="8" fill="#4e4a30"/></g>
<path d="M0 50 Q10 44 26 48 L36 52 Q40 66 38 78 L30 80 Q16 82 8 76 Q3 73 0 72 Z" fill="#9a6036"/>
<path d="M31 52 Q35 40 40 34 Q47 36 48 44 Q46 60 43 78 L33 79 Z" fill="#ad8460"/>
<path d="M36 24 Q42 20 48 24 L46 34 Q43 39 40 34 Z" fill="#8e6c4e"/><circle cx="42.5" cy="35" r="1.8" fill="#2a2018"/>
<ellipse cx="33.5" cy="19" rx="3.8" ry="6.5" transform="rotate(-35 33.5 19)" fill="#c9aa8c"/><ellipse cx="51" cy="18.5" rx="3.8" ry="6.5" transform="rotate(35 51 18.5)" fill="#c9aa8c"/>
<path d="M21 78 L20 102 M29 79 L28 103" stroke="#8a5a34" stroke-width="3.2"/><path d="M38 79 L37 101" stroke="#c2b096" stroke-width="3"/>
<rect width="77" height="104" filter="url(#nz2)" opacity="0.35"/></svg>
<div class="a" style="left:829.5px;top:775.5px;width:80px;height:107px;background:#fff"></div><svg style="left:831.0px;top:777.0px;overflow:hidden" width="77" height="104" viewBox="0 0 77 104"><defs><filter id="bl3"><feGaussianBlur stdDeviation="2.5"/></filter></defs>
<rect width="77" height="104" fill="#6b7a84"/>
<g filter="url(#bl3)"><ellipse cx="15" cy="20" rx="12" ry="10" fill="#8496a0"/><ellipse cx="62" cy="40" rx="12" ry="14" fill="#8a9aa4"/><ellipse cx="10" cy="70" rx="10" ry="14" fill="#5a6872"/><ellipse cx="66" cy="75" rx="10" ry="12" fill="#7d8c96"/><ellipse cx="40" cy="10" rx="14" ry="8" fill="#7a8a94"/></g>
<path d="M30 44 Q14 38 8 20 M16 36 Q10 28 10 12 M22 40 Q18 30 19 14 M26 42 Q20 34 18 28 M33 44 V30" fill="none" stroke="#6a4630" stroke-width="2.3" stroke-linecap="round"/>
<path d="M44 44 Q62 38 68 22 M60 38 Q66 30 67 14 M54 42 Q58 32 56 20 M50 42 Q56 36 62 34 M43 44 V30 M62 38 Q70 40 72 34" fill="none" stroke="#6a4630" stroke-width="2.3" stroke-linecap="round"/>
<path d="M6 104 Q8 88 24 84 L30 76 H48 L52 104 Z" fill="#a36c45"/>
<path d="M28 70 Q38 64 48 70 L52 104 H26 Z" fill="#5a3a26"/>
<path d="M25 46 Q38 40 52 46 Q48 52 46 56 L42 70 Q38 74 34 70 L30 56 Q27 50 25 46 Z" fill="#9a7458"/>
<circle cx="38" cy="64" r="2.6" fill="#2a2a30"/><circle cx="31.5" cy="55" r="1" fill="#111"/><circle cx="44.5" cy="55" r="1" fill="#111"/>
<path d="M58 104 Q58 90 62 84 L68 78 L72 86 L70 104 Z" fill="#8a6a52"/></svg>
<div class="a" style="left:1148.5px;top:775.5px;width:80px;height:107px;background:#fff"></div><svg style="left:1150.0px;top:777.0px;overflow:hidden" width="77" height="104" viewBox="0 0 77 104"><defs><filter id="bl6"><feGaussianBlur stdDeviation="2.2"/></filter></defs>
<rect width="77" height="104" fill="#6c7c86"/>
<g filter="url(#bl6)"><path d="M45 0 L50 0 L56 60 L50 60 Z" fill="#9aa9b2"/><path d="M66 0 L71 0 L74 50 L69 50 Z" fill="#a2b0b8"/><ellipse cx="12" cy="40" rx="10" ry="18" fill="#5e6e78"/><ellipse cx="20" cy="75" rx="14" ry="10" fill="#86959e"/><ellipse cx="68" cy="80" rx="9" ry="16" fill="#7d8c95"/></g>
<path d="M40.4 45.5 Q28 34 22.3 18 M22 28 Q12 26 9 19.8 M27.5 36 L26.5 30 M38 40 L37.5 32" fill="none" stroke="#6a4532" stroke-width="2.2" stroke-linecap="round"/>
<path d="M53.3 44.7 Q68 34 74.7 15.5 M70 26 Q64 20 59.3 16.3 M53.3 44 L53.3 32.6 M66 30 L72 28" fill="none" stroke="#6a4532" stroke-width="2.2" stroke-linecap="round"/>
<path d="M8 104 Q10 86 30 80 L36 78 L38 104 Z" fill="#a66a3c"/>
<path d="M37 68 Q47 63 58 68 L62 104 H34 Z" fill="#6e4a32"/>
<ellipse cx="32.6" cy="52.4" rx="6" ry="3.2" transform="rotate(25 32.6 52.4)" fill="#9c7a5e"/><ellipse cx="61" cy="50.7" rx="6" ry="3.2" transform="rotate(-25 61 50.7)" fill="#9c7a5e"/>
<path d="M38.7 49 Q47 45 55.8 49 L53 60 L50 67 Q47.3 69 44.6 67 L41.5 60 Z" fill="#8d6a50"/>
<circle cx="47.3" cy="63.6" r="2.5" fill="#2a2a30"/><circle cx="41.5" cy="55.5" r="1" fill="#111"/><circle cx="53.2" cy="55.5" r="1" fill="#111"/></svg>
<div class="a" style="left:1467.5px;top:775.5px;width:80px;height:107px;background:#fff"></div><svg style="left:1469.0px;top:777.0px;overflow:hidden" width="77" height="104" viewBox="0 0 77 104"><defs><filter id="bl4"><feGaussianBlur stdDeviation="1.5"/></filter><filter id="sf4"><feGaussianBlur stdDeviation="0.6"/></filter></defs>
<rect width="77" height="104" fill="#1e1a14"/>
<g filter="url(#bl4)"><rect x="0" y="28" width="24" height="76" fill="#4f4834"/><rect x="60" y="40" width="17" height="64" fill="#2c2a1e"/><rect x="0" y="0" width="12" height="34" fill="#6a5a42"/><ellipse cx="40" cy="18" rx="16" ry="10" fill="#120f0b"/></g>
<g filter="url(#sf4)">
<ellipse cx="21" cy="23" rx="9.5" ry="15.5" transform="rotate(-38 21 23)" fill="#cdb097"/>
<ellipse cx="65" cy="25.5" rx="9" ry="15" transform="rotate(42 65 25.5)" fill="#cdb097"/>
<path d="M26 34 Q42 26 60 36 Q59 50 55 60 Q50 72 42 72 Q33 71 30 62 Q26 50 26 34 Z" fill="#8e6e52"/>
<path d="M34 56 Q42 50 52 56 Q50 68 42 70 Q35 68 34 56 Z" fill="#9c7c60"/>
<path d="M28 104 Q30 82 40 72 Q54 74 58 84 L60 104 Z" fill="#b59475"/>
<circle cx="30.6" cy="41.5" r="2.2" fill="#120c08"/><circle cx="57" cy="43" r="2" fill="#120c08"/><ellipse cx="43.8" cy="58.5" rx="4.5" ry="3" fill="#3a2822"/>
</g>
<path d="M4 104 Q8 70 13 38 M10 104 Q15 78 19 48 M18 104 Q20 86 23 68 M62 104 Q67 82 75 58 M68 104 Q71 90 77 74 M2 60 Q6 50 10 44" stroke="#7f8e5c" stroke-width="1.1" fill="none" opacity="0.85"/></svg>
<div class="a" style="left:896px;top:964px;width:81px;height:106px;background:#fff"></div><div class="a" style="left:897.5px;top:965.5px;width:78px;height:103px;background:#bfc9e3"></div>
<svg style="left:0;top:0" width="1" height="1"><rect x="921.5" y="1003.5" width="29" height="28.5" fill="#f4f4f4" stroke="#8a8a8a" stroke-width="1"/><rect x="924" y="1006" width="24" height="19" fill="#a7d0f2"/><path d="M924 1025 L930 1018 L935 1022 L940 1016 L948 1025 Z" fill="#e8f2fb"/><circle cx="941.5" cy="1010.5" r="2.5" fill="#f5a26b"/></svg>
<div class="t" style="left:1259.6px;top:417.6px;font-size:27.10px;color:#ffffff;transform:scaleX(0.9819);">John Doe</div>
<div class="t" style="left:1251.4px;top:463.3px;font-size:27.83px;color:#ffffff;transform:scaleX(0.9845);">1882-1956</div>
<div class="t" style="left:1096.1px;top:582.1px;font-size:26.67px;color:#ffffff;transform:scaleX(1.0000);">Janet Doe</div>
<div class="t" style="left:1091.4px;top:627.6px;font-size:27.54px;color:#ffffff;transform:scaleX(0.9943);">1921-2004</div>
<div class="t" style="left:925.4px;top:791.5px;font-size:27.83px;color:#ffffff;transform:scaleX(0.9683);">Jimmy Deer</div>
<div class="t" style="left:962.4px;top:837.5px;font-size:27.83px;color:#ffffff;transform:scaleX(0.9868);">1942-</div>
<div class="t" style="left:1240.6px;top:791.5px;font-size:27.83px;color:#ffffff;transform:scaleX(0.9605);">Johnny Deer</div>
<div class="t" style="left:1281.1px;top:837.5px;font-size:27.83px;color:#ffffff;transform:scaleX(0.9942);">1945-</div>
<div class="t" style="left:1575.3px;top:791.5px;font-size:27.83px;color:#ffffff;transform:scaleX(0.9591);">Julie Deer</div>
<div class="t" style="left:1600.1px;top:837.5px;font-size:27.83px;color:#ffffff;transform:scaleX(1.0015);">1947-</div>
<svg style="left:0;top:0" width="1" height="1"><rect x="782.5" y="389" width="972.5" height="694.5" fill="none" stroke="#a8a8a8" stroke-width="1.7"/><circle cx="782.5" cy="389" r="7" fill="#fff" stroke="#9c9c9c" stroke-width="2.7"/><circle cx="1268.5" cy="389" r="7" fill="#fff" stroke="#9c9c9c" stroke-width="2.7"/><circle cx="1755" cy="389" r="7" fill="#fff" stroke="#9c9c9c" stroke-width="2.7"/><circle cx="1755" cy="736" r="7" fill="#fff" stroke="#9c9c9c" stroke-width="2.7"/><circle cx="782.5" cy="1083.5" r="7" fill="#fff" stroke="#9c9c9c" stroke-width="2.7"/><circle cx="1268.5" cy="1083.5" r="7" fill="#fff" stroke="#9c9c9c" stroke-width="2.7"/><circle cx="1755" cy="1083.5" r="7" fill="#fff" stroke="#9c9c9c" stroke-width="2.7"/></svg>
<div class="a" style="left:770px;top:723px;width:25px;height:26px;background:#fff;border:1px solid #d6d6d6;box-sizing:border-box"></div>
<svg style="left:0;top:0" width="1" height="1"><path d="M783.5 733 L780.5 736 L783.5 739" fill="none" stroke="#777" stroke-width="1.2"/></svg>
<div class="a" style="left:1772px;top:389px;width:41.5px;height:41.5px;background:#fff;border:1.5px solid #bdbdbd;box-sizing:border-box"></div>
<svg style="left:0;top:0" width="1" height="1"><path d="M1778.2 398.5 H1806.6 M1778.2 419.8 H1806.6" stroke="#2f8ad6" stroke-width="1.6" stroke-linecap="round"/><path d="M1778.2 403.9 H1781.2 M1803.6 403.9 H1806.6 M1778.2 409.2 H1781.2 M1803.6 409.2 H1806.6 M1778.2 414.4 H1781.2 M1803.6 414.4 H1806.6" stroke="#2f8ad6" stroke-width="1.6" stroke-linecap="round"/><path d="M1783.1 414.9 A9.3 9.3 0 0 1 1801.7 414.9 H1797.1 A4.7 4.7 0 0 0 1787.7 414.9 Z" fill="#333"/></svg>
</body></html>
